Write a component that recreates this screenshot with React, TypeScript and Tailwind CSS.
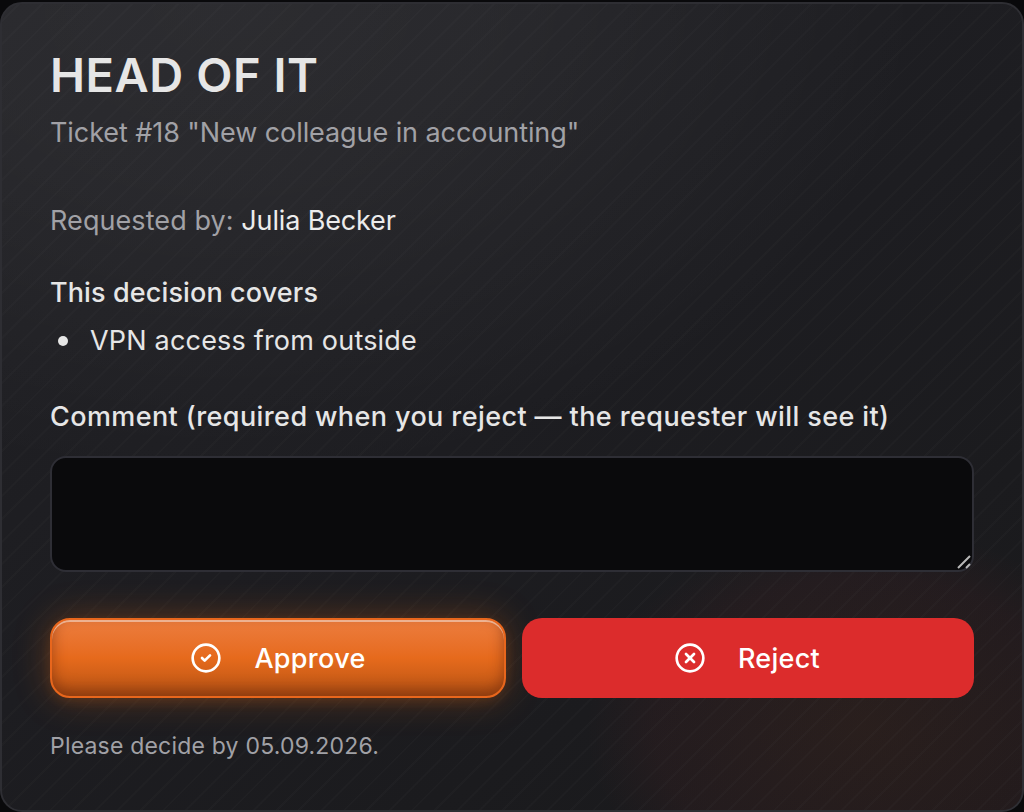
import { CircleCheck, CircleX } from "lucide-react";

/** Diagonal hairlines over the two glows and the base fade */
const cardBg = [
  "repeating-linear-gradient(135deg, transparent 0 14px, rgba(255,255,255,0.015) 14px 16px)",
  "radial-gradient(ellipse 280px 200px at 865px 725px, rgba(245,95,35,0.07) 0%, rgba(239,60,60,0.045) 75%, transparent 100%)",
  "radial-gradient(ellipse 700px 480px at 225px 0px, rgba(255,255,255,0.055) 0%, rgba(255,255,255,0.045) 40%, transparent 100%)",
  "linear-gradient(150deg, #212125 0%, #1d1d21 50%, #19191b 100%)",
].join(", ");

const approveShadow = [
  "inset 0 2px 0 rgba(255,255,255,0.45)",
  "inset 0 -6px 14px rgba(90,30,10,0.5)",
  "0 0 36px rgba(249,115,22,0.3)",
  "0 4px 12px rgba(249,115,22,0.12)",
].join(", ");

const covers = ["VPN access from outside"];

export default function App() {
  return (
    <div className="h-[812px] w-[1024px] overflow-hidden bg-[#09090b] pt-0.5 font-['Inter',sans-serif] text-[27px] leading-10 text-[#e6e6e6]">
      <main
        className="flex h-[810px] flex-col rounded-[22px] border-2 border-[#2e2e33] px-12 pb-12 pt-[47px]"
        style={{ background: cardBg, backgroundOrigin: "border-box" }}
      >
        <h1 className="whitespace-nowrap text-[47px] font-semibold leading-[48px] tracking-[0.55px]">HEAD OF IT</h1>
        <p className="mt-3.5 whitespace-nowrap tracking-[-0.08px] text-[#a1a1a6]">
          Ticket #18 "New colleague in accounting"
        </p>

        <p className="mt-12 whitespace-nowrap tracking-[0.08px] text-[#a1a1a6]">
          Requested by: <span className="tracking-[-0.15px] text-[#ececec]">Julia Becker</span>
        </p>

        <h2 className="mt-8 whitespace-nowrap font-medium tracking-[0.12px]">This decision covers</h2>
        <ul className="mt-2">
          {covers.map((item) => (
            <li key={item} className="flex items-center whitespace-nowrap tracking-[0.19px]">
              <span className="ml-2 mr-[22px] size-2.5 rounded-full bg-[#e6e6e6]" />
              {item}
            </li>
          ))}
        </ul>

        <label htmlFor="comment" className="mt-9 whitespace-nowrap font-medium tracking-[0.4px]">
          Comment (required when you reject — the requester will see it)
        </label>
        <div className="relative mt-[19px] h-[116px]">
          <textarea
            id="comment"
            className="block h-full w-full resize-none rounded-2xl border-2 border-[#2e2e35] bg-[#0a0a0c] px-6 py-4 outline-none"
          />
          <svg className="absolute bottom-[3px] right-[3px] size-[14px]" viewBox="0 0 14 14" stroke="#b8b8b8" strokeWidth="2">
            <path d="M1 13 13 1M9 13l4-4" />
          </svg>
        </div>

        <div className="mt-[46px] flex h-20 gap-4 font-medium tracking-[0.3px] text-white">
          <button
            className="flex w-[456px] items-center justify-center gap-8 rounded-[20px] border-2 border-[#e8661c] bg-linear-to-b from-[#ec7d3d] via-[#e66a1c] to-[#b95414]"
            style={{ boxShadow: approveShadow }}
          >
            <CircleCheck size={32} />
            <span className="pt-0.5">Approve</span>
          </button>
          <button className="flex w-[452px] items-center justify-center gap-8 rounded-[20px] bg-[#dc2c2c] pr-0.5">
            <CircleX size={32} />
            <span className="pt-0.5">Reject</span>
          </button>
        </div>

        <p className="mt-8 whitespace-nowrap text-[23px] leading-8 tracking-[0.2px] text-[#a1a1a6]">
          Please decide by 05.09.2026.
        </p>
      </main>
    </div>
  );
}
